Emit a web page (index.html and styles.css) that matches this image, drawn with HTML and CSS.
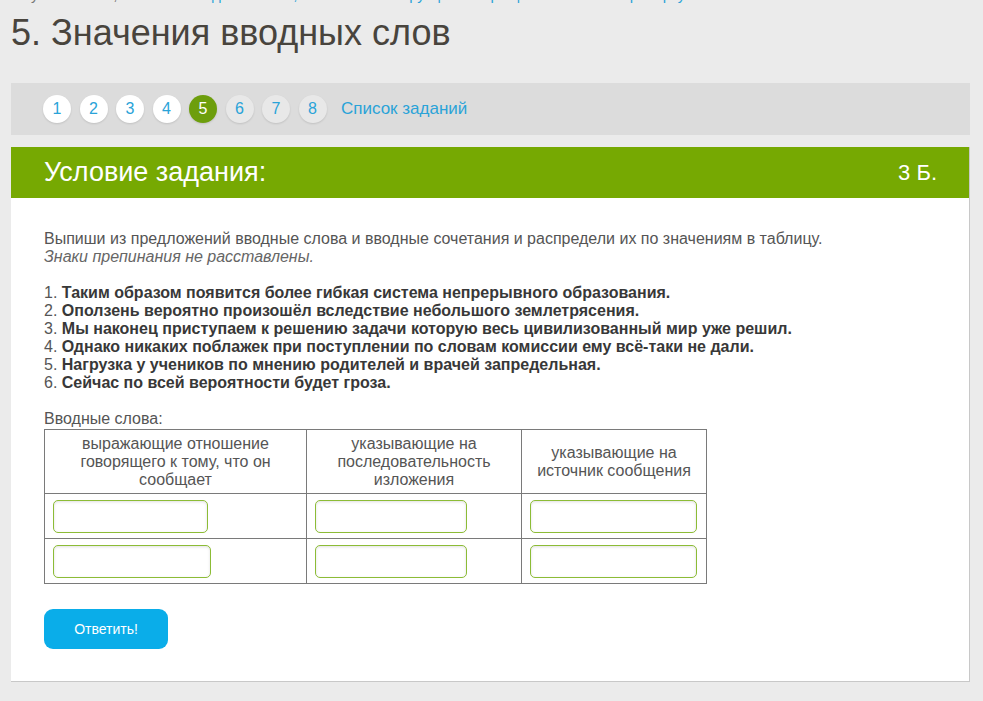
FILE: index.html
```html
<!DOCTYPE html>
<html lang="ru">
<head>
  <meta charset="UTF-8" />
  <title>5. Значения вводных слов</title>
  <link rel="stylesheet" href="styles.css">
</head>
<body>
  <div class="crumbs">Русский язык, 8 класс › <a href="#">Вводные слова, вставные конструкции и обращения › Тест на проверку</a></div>

  <h1 class="title">5. Значения вводных слов</h1>

  <div class="pager">
    <a class="num" href="#">1</a>
    <a class="num" href="#">2</a>
    <a class="num" href="#">3</a>
    <a class="num" href="#">4</a>
    <a class="num active" href="#">5</a>
    <a class="num todo" href="#">6</a>
    <a class="num todo" href="#">7</a>
    <a class="num todo" href="#">8</a>
    <a class="list-link" href="#">Список заданий</a>
  </div>

  <div class="task">
    <div class="task-head">
      <span>Условие задания:</span>
      <span class="points">3 Б.</span>
    </div>
    <div class="task-body">
      <p class="intro">
        Выпиши из предложений вводные слова и вводные сочетания и распредели их по значениям в таблицу.<br />
        <em>Знаки препинания не расставлены.</em>
      </p>

      <p class="sentences">
        1. <b>Таким образом появится более гибкая система непрерывного образования.</b><br />
        2. <b>Оползень вероятно произошёл вследствие небольшого землетрясения.</b><br />
        3. <b>Мы наконец приступаем к решению задачи которую весь цивилизованный мир уже решил.</b><br />
        4. <b>Однако никаких поблажек при поступлении по словам комиссии ему всё-таки не дали.</b><br />
        5. <b>Нагрузка у учеников по мнению родителей и врачей запредельная.</b><br />
        6. <b>Сейчас по всей вероятности будет гроза.</b>
      </p>

      <div class="caption">Вводные слова:</div>
      <table class="answers">
        <tr>
          <th class="c1">выражающие отношение говорящего к тому, что он сообщает</th>
          <th class="c2">указывающие на последовательность изложения</th>
          <th class="c3">указывающие на источник сообщения</th>
        </tr>
        <tr>
          <td><input type="text" /></td>
          <td><input type="text" /></td>
          <td><input type="text" /></td>
        </tr>
        <tr>
          <td><input type="text" class="wide" /></td>
          <td><input type="text" /></td>
          <td><input type="text" /></td>
        </tr>
      </table>

      <button class="submit">Ответить!</button>
    </div>
  </div>
</body>
</html>
```

FILE: styles.css
```css
body {
  margin: 0;
  padding: 0 13px 0 11px;
  background: #ebebeb;
  font-family: "Liberation Sans", Arial, sans-serif;
  color: #555;
  overflow: hidden;
}
.crumbs {
  margin: -13px 0 0 10px;
  font-size: 15px;
  line-height: 16px;
  color: #777;
  white-space: nowrap;
}
.crumbs a {
  color: #2aa3d8;
  text-decoration: none;
}
.title {
  margin: 10px 0 0;
  font-size: 36px;
  line-height: 40px;
  font-weight: normal;
  color: #48443d;
}
.pager {
  margin-top: 30px;
  height: 52px;
  background: #dcdcdc;
  display: flex;
  align-items: center;
  gap: 8.5px;
  padding-left: 32px;
}
.num {
  width: 28px;
  height: 28px;
  border-radius: 50%;
  background: #fff;
  color: #2aa3d8;
  font-size: 16px;
  text-decoration: none;
  display: flex;
  align-items: center;
  justify-content: center;
  box-shadow: 0 1px 2px rgba(0, 0, 0, 0.12);
}
.num.active {
  background: #6d9e0c;
  color: #fff;
}
.num.todo {
  background: #e8e8e8;
}
.list-link {
  margin-left: 6px;
  color: #2aa3d8;
  font-size: 17px;
  text-decoration: none;
}
.task {
  margin-top: 12px;
  background: #fff;
  border-right: 1px solid #c8c8c8;
  border-bottom: 1px solid #c8c8c8;
}
.task-head {
  height: 51px;
  background: #76a902;
  color: #fff;
  display: flex;
  align-items: center;
  justify-content: space-between;
  padding: 0 32px 0 33px;
  font-size: 27px;
}
.task-head .points {
  font-size: 22px;
}
.task-body {
  padding: 32px 33px 32px;
}
.intro {
  margin: 0;
  font-size: 16px;
  line-height: 18px;
  color: #555;
}
.intro em {
  color: #666;
}
.sentences {
  margin: 18px 0 0;
  font-size: 16px;
  line-height: 18px;
  color: #555;
}
.sentences b {
  color: #383838;
}
.caption {
  margin-top: 18px;
  font-size: 16px;
  line-height: 18px;
}
.answers {
  border-collapse: collapse;
  margin-top: 1px;
}
.answers th,
.answers td {
  border: 1px solid #7a7a7a;
}
.answers th {
  height: 63px;
  font-weight: normal;
  font-size: 16px;
  line-height: 18px;
  color: #555;
  padding: 0 8px;
}
.answers .c1 { width: 245px; }
.answers .c2 { width: 198px; }
.answers .c3 { width: 168px; }
.answers td {
  height: 44px;
  padding: 0 8px;
}
.answers input {
  display: block;
  box-sizing: border-box;
  width: 155px;
  height: 33px;
  border: 1px solid #8cbc36;
  border-radius: 5px;
  box-shadow: inset 0 1px 3px rgba(0, 0, 0, 0.12);
  font-size: 15px;
  padding: 0 6px;
}
.answers input.wide {
  width: 158px;
}
.answers td:nth-child(2) input {
  width: 152px;
}
.answers td:nth-child(3) input {
  width: 167px;
}
.submit {
  margin-top: 25px;
  width: 124px;
  height: 40px;
  border: none;
  border-radius: 9px;
  background: #0aade9;
  color: #fff;
  font-family: "Liberation Sans", Arial, sans-serif;
  font-size: 14px;
  cursor: pointer;
}
```
